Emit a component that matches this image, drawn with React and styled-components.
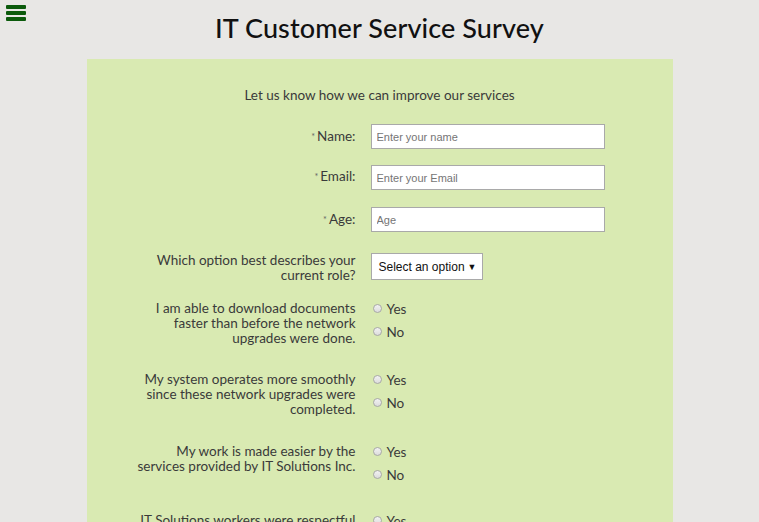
import { createGlobalStyle, styled } from "styled-components";

const GlobalStyle = createGlobalStyle`
    html, body {
        margin: 0;
        padding: 0;
        background-color: #e8e7e5;
        font-family: "Lato", "Liberation Sans", sans-serif;
        color: #333;
    }
`

const StyledPage = styled.div`
    width: 100%;
    min-height: 100vh;
    padding-top: 1px;
    box-sizing: border-box;
`

const MenuButton = styled.button`
    position: absolute;
    left: 6px;
    top: 5px;
    width: 20px;
    height: 16px;
    padding: 0;
    border: none;
    background: transparent;
    display: flex;
    flex-direction: column;
    justify-content: space-between;
    span {
        display: block;
        height: 4px;
        border-radius: 1px;
        background-color: #0b5a0b;
    }
`

const Title = styled.h1`
    margin: 10px 0 0;
    height: 48px;
    text-align: center;
    font-size: 27px;
    font-weight: 500;
    color: #111;
    letter-spacing: 0.1px;
`

const Panel = styled.div`
    width: 586px;
    margin: 0 auto;
    background-color: #d9eab2;
    padding: 28px 0 40px;
    box-sizing: border-box;
`

const Intro = styled.p`
    margin: 0 0 21px;
    text-align: center;
    font-size: 13.5px;
    line-height: 16px;
    color: #3a3a3a;
`

const Row = styled.div`
    display: grid;
    grid-template-columns: 269px 1fr;
    column-gap: 15px;
    align-items: start;
    margin-top: ${p => p.$top || 0}px;
`

const Label = styled.label`
    text-align: right;
    font-size: 13.5px;
    line-height: 15px;
    color: #3a3a3a;
    padding-top: ${p => p.$pad || 0}px;
    .star {
        font-size: 9px;
        vertical-align: top;
        margin-right: 2px;
        color: #666;
    }
`

const TextInput = styled.input`
    width: 234px;
    height: 25px;
    box-sizing: border-box;
    border: 1px solid #a9a9a9;
    background: #fff;
    padding: 0 5px;
    font-family: "Liberation Sans", Arial, sans-serif;
    font-size: 11px;
    outline: none;
    &::placeholder {
        color: #757575;
    }
`

const SelectBox = styled.div`
    width: 112px;
    height: 27px;
    box-sizing: border-box;
    border: 1px solid #a9a9a9;
    background: #fff;
    display: flex;
    align-items: center;
    justify-content: space-between;
    padding: 0 5px 0 7px;
    font-family: "Liberation Sans", Arial, sans-serif;
    font-size: 12px;
    color: #111;
    .arrow {
        font-size: 9px;
    }
`

const RadioGroup = styled.div`
    display: flex;
    flex-direction: column;
`

const RadioOption = styled.label`
    display: flex;
    align-items: center;
    height: 23px;
    font-size: 13.5px;
    color: #3a3a3a;
    padding-left: 2px;
    .dot {
        width: 9px;
        height: 9px;
        border-radius: 50%;
        box-sizing: border-box;
        border: 1px solid #a8a8a8;
        background: linear-gradient(#f2f2f2, #dcdcdc);
        margin-right: 5px;
    }
`

const questions = [
    { text: ["I am able to download documents", "faster than before the network", "upgrades were done."], top: 14 },
    { text: ["My system operates more smoothly", "since these network upgrades were", "completed."], top: 22 },
    { text: ["My work is made easier by the", "services provided by IT Solutions Inc."], top: 23 },
    { text: ["IT Solutions workers were respectful", "and helpful."], top: 23 },
]

const Lines = ({ lines }) => lines.map((l, i) => <span key={i}>{l}{i < lines.length - 1 && <br />}</span>)

export default function App() {
    return <>
        <GlobalStyle />
        <StyledPage>
            <MenuButton aria-label="menu"><span /><span /><span /></MenuButton>
            <Title>IT Customer Service Survey</Title>
            <Panel>
                <Intro>Let us know how we can improve our services</Intro>
                <Row>
                    <Label $pad={5}><span className="star">*</span>Name:</Label>
                    <TextInput placeholder="Enter your name" />
                </Row>
                <Row $top={16}>
                    <Label $pad={4}><span className="star">*</span>Email:</Label>
                    <TextInput placeholder="Enter your Email" />
                </Row>
                <Row $top={17}>
                    <Label $pad={5}><span className="star">*</span>Age:</Label>
                    <TextInput placeholder="Age" />
                </Row>
                <Row $top={21}>
                    <Label $pad={0}><Lines lines={["Which option best describes your", "current role?"]} /></Label>
                    <SelectBox>Select an option <span className="arrow">▼</span></SelectBox>
                </Row>
                {questions.map((q, i) => (
                    <Row key={i} $top={q.top}>
                        <Label $pad={4}><Lines lines={q.text} /></Label>
                        <RadioGroup>
                            <RadioOption><span className="dot" />Yes</RadioOption>
                            <RadioOption><span className="dot" />No</RadioOption>
                        </RadioGroup>
                    </Row>
                ))}
            </Panel>
        </StyledPage>
    </>
}
